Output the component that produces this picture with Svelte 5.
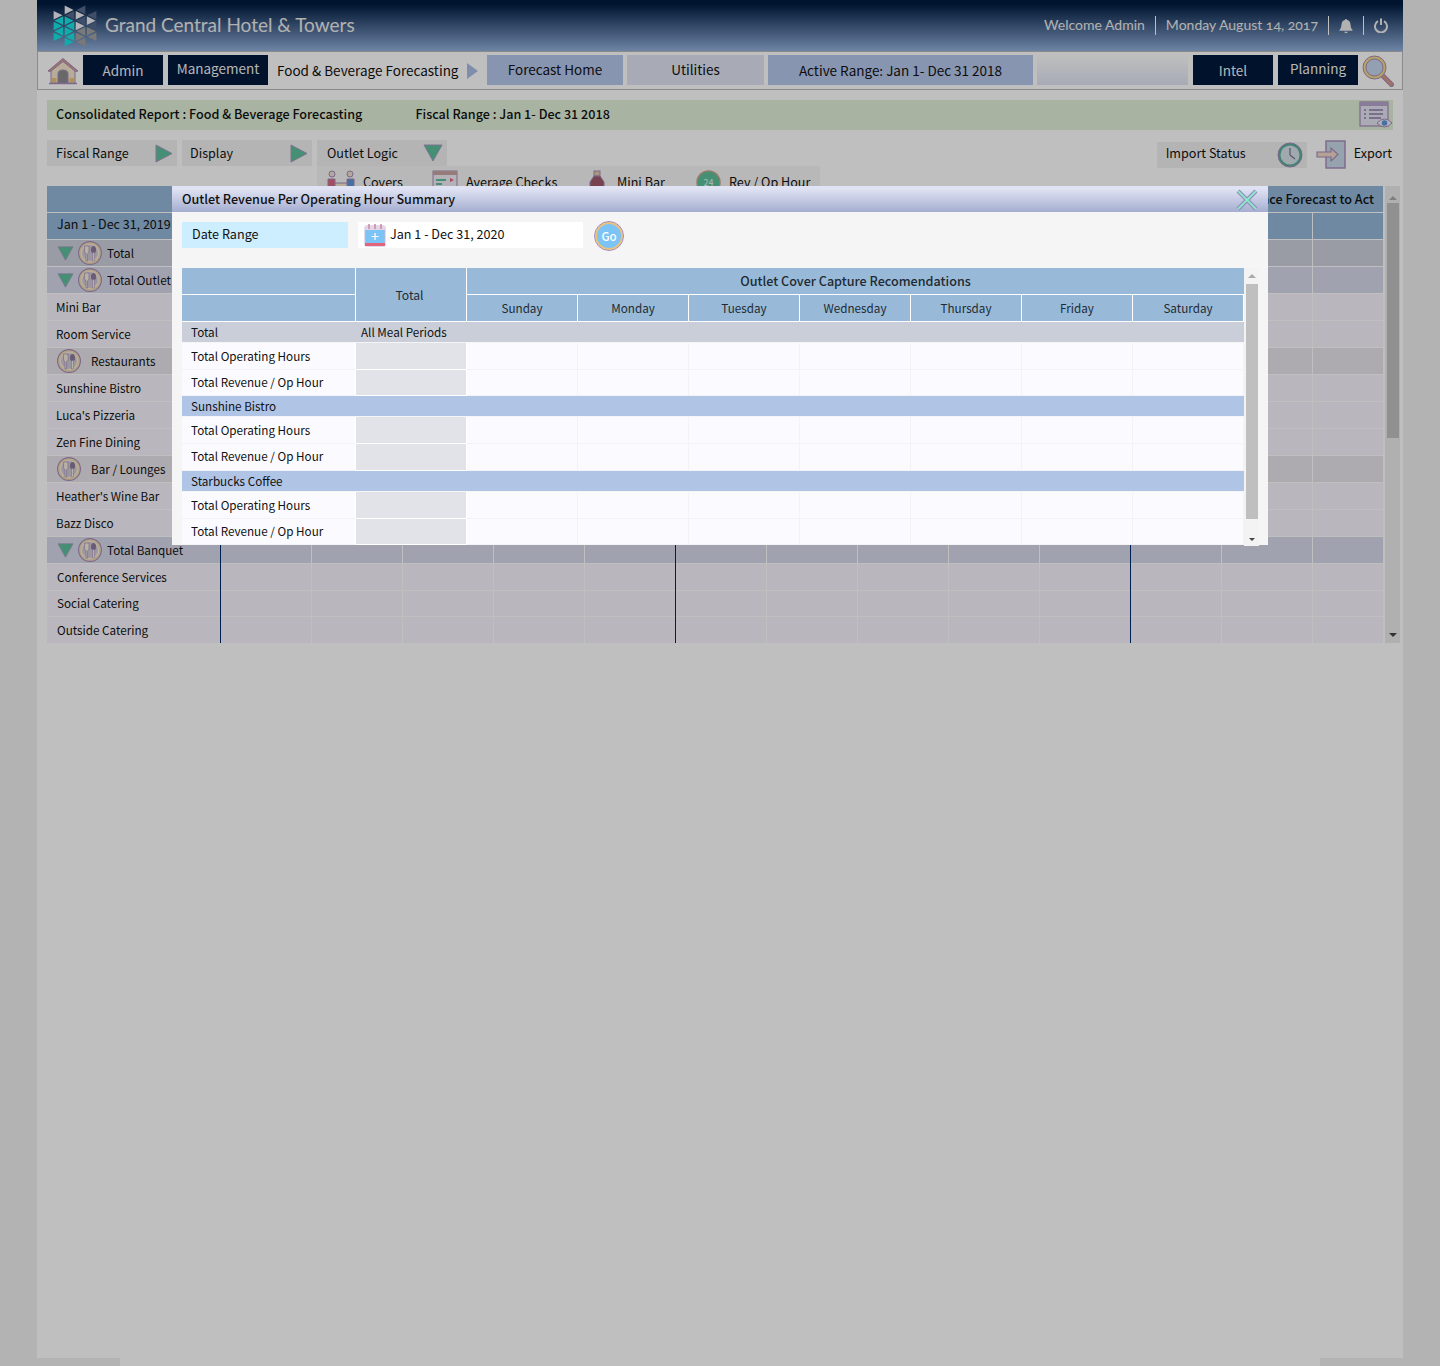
<script>
	const gridRows = [
		{ label: 'Total', kind: 'total', arrow: true, icon: true },
		{ label: 'Total Outlet', kind: 'sum', arrow: true, icon: true },
		{ label: 'Mini Bar', kind: 'item' },
		{ label: 'Room Service', kind: 'item' },
		{ label: 'Restaurants', kind: 'group', icon: true },
		{ label: 'Sunshine Bistro', kind: 'item' },
		{ label: "Luca's Pizzeria", kind: 'item' },
		{ label: 'Zen Fine Dining', kind: 'item' },
		{ label: 'Bar / Lounges', kind: 'group', icon: true },
		{ label: "Heather's Wine Bar", kind: 'item' },
		{ label: 'Bazz Disco', kind: 'item' },
		{ label: 'Total Banquet', kind: 'sum', arrow: true, icon: true },
		{ label: 'Conference Services', kind: 'item banquet' },
		{ label: 'Social Catering', kind: 'item banquet' },
		{ label: 'Outside Catering', kind: 'item banquet' }
	];
	const cols = Array.from({ length: 13 }, (_, i) => i);
	const days = ['Sunday', 'Monday', 'Tuesday', 'Wednesday', 'Thursday', 'Friday', 'Saturday'];
	const sections = [
		{ name: 'Sunshine Bistro' },
		{ name: 'Starbucks Coffee' }
	];

	// hexagon logo made of little triangles
	const logoTris = [];
	const h = 0.866;
	for (let c = -2; c < 2; c++) {
		for (let r = -5; r < 5; r++) {
			const x0 = c * h;
			const x1 = x0 + h;
			const odd = (c + r + 16) % 2 === 0;
			const y = r * 0.5;
			const pts = odd
				? [[x0, y - 0.5], [x0, y + 0.5], [x1, y]]
				: [[x1, y - 0.5], [x1, y + 0.5], [x0, y]];
			const cx = (pts[0][0] + pts[1][0] + pts[2][0]) / 3;
			const cy = (pts[0][1] + pts[1][1] + pts[2][1]) / 3;
			if (Math.abs(cy) + Math.abs(cx) * 0.577 > 2) continue;
			let fill;
			if (cx < 0 && cy > -0.6) fill = '#15e6e4';
			else if (cx >= 0 && cy > 0) fill = '#a2a2a2';
			else if (odd) fill = '#f0f0f6';
			else fill = '#55698c';
			const s = 0.8;
			const points = pts
				.map((p) => `${(cx + (p[0] - cx) * s).toFixed(3)},${(cy + (p[1] - cy) * s).toFixed(3)}`)
				.join(' ');
			logoTris.push({ points, fill });
		}
	}
</script>

{#snippet arrowRight()}
	<svg class="arrow" width="18" height="19" viewBox="0 0 18 19">
		<path d="M1 1 L17 9.5 L1 18 Z" fill="#5cc09c" stroke="#a79ac0" stroke-width="1" />
	</svg>
{/snippet}

{#snippet arrowDown(w = 20, ht = 18)}
	<svg class="arrow" width={w} height={ht} viewBox="0 0 20 18">
		<path d="M1 1 L19 1 L10 17 Z" fill="#5cc09c" stroke="#a79ac0" stroke-width="1" />
	</svg>
{/snippet}

{#snippet cutlery()}
	<svg class="cutlery" width="24" height="24" viewBox="0 0 24 24">
		<circle cx="12" cy="12" r="11.4" fill="#eed9b4" stroke="#a58bb8" stroke-width="1.1" />
		<circle cx="12" cy="12" r="8.6" fill="#cfcad8" stroke="#f6ead2" stroke-width="1.4" />
		<path d="M6.6 5 v5.500 q0 1.800 1.400 2.200 v7.300 h1.600 v-7.300 q1.400-.4 1.400-2.200 v-5.500 z" fill="#f6eedc" stroke="#a58bb8" stroke-width=".7" />
		<ellipse cx="15.500" cy="8.800" rx="2.500" ry="3.800" fill="#8c7a9c" />
		<rect x="14.700" y="11.500" width="1.600" height="8.500" fill="#f6eedc" stroke="#a58bb8" stroke-width=".5" />
	</svg>
{/snippet}

<div class="page">
	<div class="shell">
		<header class="topbar">
			<svg class="logo" width="46" height="44" viewBox="-1.8 -2.05 3.6 4.1" preserveAspectRatio="none">
				{#each logoTris as t}
					<polygon points={t.points} fill={t.fill} />
				{/each}
			</svg>
			<h1>Grand Central Hotel &amp; Towers</h1>
			<div class="user">
				<span>Welcome Admin</span>
				<i></i>
				<span>Monday August 14, 2017</span>
				<i></i>
				<svg width="14" height="16" viewBox="0 0 15 16">
					<path d="M7.5 0.5 q1 0 1.2 1.2 q3.4.8 3.6 4.6 q.1 3.6 2.2 6 v.9 H.5 v-.9 q2.1-2.4 2.2-6 q.2-3.800 3.600-4.600 q.2-1.200 1.200-1.200 z M5.500 14.200 h4 q-.4 1.500-2 1.500 t-2-1.500 z" fill="#ededed" />
				</svg>
				<i></i>
				<svg width="14" height="15" viewBox="0 0 14 15">
					<path d="M4 3.200 A6 6 0 1 0 10 3.200" fill="none" stroke="#ededed" stroke-width="2" />
					<path d="M7 0.500 v6.500" stroke="#ededed" stroke-width="2" />
				</svg>
			</div>
		</header>

		<nav class="navbar">
			<svg class="home" width="32" height="28" viewBox="0 0 32 28">
				<path d="M4 26 V13 L16 3 L28 13 V26 Z" fill="#f4e6cc" stroke="#a58bb8" stroke-width="1" />
				<path d="M1 14 L16 1.500 L31 14 L28.500 14.500 L16 4.500 L3.500 14.500 Z" fill="#d79a8e" stroke="#a58bb8" stroke-width="1" />
				<path d="M11 26 V17 q0-4 5-4 t5 4 V26 Z" fill="#8b8b8f" stroke="#a58bb8" stroke-width="1" />
				<rect x="4.500" y="21" width="5" height="4.500" fill="#eac27c" />
				<rect x="22.500" y="21" width="5" height="4.500" fill="#eac27c" />
				<path d="M2 26.500 H30" stroke="#a58bb8" stroke-width="1.500" />
			</svg>
			<a class="dark b80 admin">Admin</a>
			<a class="dark mgmt">Management</a>
			<span class="crumb">Food &amp; Beverage Forecasting</span>
			<svg class="crumb-arrow" width="11" height="16" viewBox="0 0 11 16"><path d="M0 0 L11 8 L0 16 Z" fill="#a9bde6" /></svg>
			<a class="tab blue fhome">Forecast Home</a>
			<a class="tab pale util">Utilities</a>
			<a class="tab blue active">Active Range: Jan 1- Dec 31 2018</a>
			<span class="tab fade"></span>
			<a class="dark b80 intel">Intel</a>
			<a class="dark b80 plan">Planning</a>
			<svg class="search" width="32" height="32" viewBox="0 0 32 32">
				<path d="M20 20 L29.500 29.500" stroke="#a58bb8" stroke-width="5" stroke-linecap="round" />
				<path d="M20 20 L29.500 29.500" stroke="#d99a86" stroke-width="3" stroke-linecap="round" />
				<circle cx="12.500" cy="12.500" r="11.500" fill="#f5d88c" stroke="#a58bb8" stroke-width="1" />
				<circle cx="12.500" cy="12.500" r="8.500" fill="#c4d6ee" stroke="#a58bb8" stroke-width="1" />
			</svg>
		</nav>

		<section class="report">
			<strong>Consolidated Report : Food &amp; Beverage Forecasting</strong>
			<strong class="fiscal">Fiscal Range : Jan 1- Dec 31 2018</strong>
			<svg class="report-ico" width="34" height="28" viewBox="0 0 34 28">
				<rect x="1" y="1" width="28" height="24" fill="#e4e4f2" stroke="#a58bb8" stroke-width="1.200" />
				<rect x="1" y="1" width="28" height="4" fill="#b7a6cc" />
				<path d="M5 9 h2 M5 13 h2 M5 17 h2 M10 9 h14 M10 13 h14 M10 17 h12" stroke="#8f7ba8" stroke-width="1.500" />
				<path d="M18 22 q7.500-8 15 0 q-7.500 8-15 0 z" fill="#f0f0f8" stroke="#a58bb8" stroke-width="1" />
				<circle cx="25.500" cy="22" r="2.800" fill="#5f94d8" />
			</svg>
		</section>

		<section class="filters">
			<div class="chip"><span>Fiscal Range</span> {@render arrowRight()}</div>
			<div class="chip display"><span>Display</span> {@render arrowRight()}</div>
			<div class="chip logic">
				<span>Outlet Logic</span> {@render arrowDown()}
				<div class="dropdown">
					<span class="opt covers">
						<svg width="28" height="30" viewBox="0 0 28 30">
							<circle cx="5" cy="4" r="3" fill="#f0dfd0" stroke="#a58bb8" />
							<circle cx="23" cy="4" r="3" fill="#f0dfd0" stroke="#a58bb8" />
							<path d="M1 9 h7 v16 h-7 z" fill="#e0657a" stroke="#a58bb8" />
							<path d="M20 9 h7 v16 h-7 z" fill="#5f94d8" stroke="#a58bb8" />
							<rect x="8" y="13" width="12" height="8" fill="#f4e6cc" stroke="#a58bb8" />
						</svg>
						Covers
					</span>
					<span class="opt checks">
						<svg width="26" height="24" viewBox="0 0 26 24">
							<rect x="1" y="1" width="24" height="20" fill="#f0eef4" stroke="#a58bb8" />
							<rect x="1" y="1" width="24" height="4" fill="#c9a4a4" />
							<path d="M4 10 h10 M4 14 h6" stroke="#5cc09c" stroke-width="2" />
							<path d="M18 8 l4 2 -4 2 z" fill="#e0657a" />
							<path d="M8 22 l10-6 v6 z" fill="#5f94d8" />
						</svg>
						Average Checks
					</span>
					<span class="opt minibar">
						<svg width="22" height="24" viewBox="0 0 22 24">
							<rect x="7" y="1" width="6" height="5" fill="#e6c9a4" stroke="#a58bb8" />
							<path d="M7 6 h6 l4 6 v10 h-14 v-10 z" fill="#a0586c" stroke="#a58bb8" />
							<path d="M3 17 h19" stroke="#a58bb8" stroke-width="2" />
						</svg>
						Mini Bar
					</span>
					<span class="opt rev">
						<svg width="25" height="25" viewBox="0 0 25 25">
							<circle cx="12.500" cy="12.500" r="11.500" fill="#5cc09c" stroke="#c5a58c" stroke-width="1.500" />
							<text x="12.500" y="16" text-anchor="middle" font-size="9" fill="#e8f4ee">24</text>
						</svg>
						Rev / Op Hour
					</span>
				</div>
			</div>
			<div class="right">
				<div class="chip import">
					<span>Import Status</span>
					<svg width="26" height="26" viewBox="0 0 26 26">
						<circle cx="13" cy="13" r="12" fill="#5cb09c" stroke="#a58bb8" stroke-width="1" />
						<circle cx="13" cy="13" r="9.500" fill="#d4e2e8" />
						<path d="M13 6 v7 l5 4" fill="none" stroke="#7a6e92" stroke-width="1.200" />
					</svg>
				</div>
				<div class="export">
					<svg width="30" height="29" viewBox="0 0 30 29">
						<rect x="10" y="1" width="19" height="27" fill="#cad8ea" stroke="#a58bb8" stroke-width="1.400" />
						<path d="M1 12 h14 v-4 l7 6.500 -7 6.500 v-4 h-14 z" fill="#f0d9c8" stroke="#a58bb8" stroke-width="1.100" />
					</svg>
					<span>Export</span>
				</div>
			</div>
		</section>

		<section class="grid-wrap">
			<div class="grid">
				<div class="row head">
					<div class="cell first"></div>
					<div class="cell wide"></div>
					<div class="cell wide"></div>
					<div class="cell variance">Variance Forecast to Act</div>
				</div>
				<div class="row head">
					<div class="cell first"><span>Jan 1 - Dec 31, 2019</span></div>
					{#each cols as c}
						<div class="cell" class:check={c === 10}>{c === 10 ? 'Avg Check' : ''}</div>
					{/each}
				</div>
				{#each gridRows as r}
					<div class="row {r.kind}">
						<div class="cell first">
							{#if r.arrow}{@render arrowDown(17, 15)}{/if}
							{#if r.icon}{@render cutlery()}{/if}
							<span>{r.label}</span>
						</div>
						{#each cols as c}
							<div class="cell" class:navy={c === 0 || c === 5 || c === 10}></div>
						{/each}
					</div>
				{/each}
			</div>
			<div class="bar">
				<span class="up"></span>
				<span class="thumb"></span>
				<span class="down"></span>
			</div>
		</section>

		<footer class="foot"><span></span></footer>

		<div class="dim"></div>

		<div class="modal">
			<div class="m-title">
				Outlet Revenue Per Operating Hour Summary
				<svg class="close" width="22" height="22" viewBox="0 0 22 22">
					<path d="M2 2 L20 20 M20 2 L2 20" stroke="#8f86bb" stroke-width="4" />
					<path d="M2 2 L20 20 M20 2 L2 20" stroke="#8ce8c8" stroke-width="2" />
				</svg>
			</div>
			<div class="m-filter">
				<div class="m-label">Date Range</div>
				<div class="m-input">
					<svg width="22" height="24" viewBox="0 0 22 24">
						<rect x="1" y="3" width="20" height="20" rx="1" fill="#7cc4f5" stroke="#c7b4d8" />
						<rect x="1" y="3" width="20" height="4" fill="#e4d4e8" />
						<rect x="1" y="20" width="20" height="3" fill="#e0657a" />
						<path d="M5 1 v5 M11 1 v5 M17 1 v5" stroke="#c58c9c" stroke-width="1.500" />
						<path d="M11 10 v7 M7.500 13.500 h7" stroke="#fff" stroke-width="1.200" />
					</svg>
					<span>Jan 1 - Dec 31, 2020</span>
				</div>
				<div class="go">Go</div>
			</div>
			<div class="m-body">
				<div class="m-table">
					<div class="hd blank1"></div>
					<div class="hd total">Total</div>
					<div class="hd caption">Outlet Cover Capture Recomendations</div>
					<div class="hd blank2"></div>
					{#each days as d}<div class="hd">{d}</div>{/each}

					<div class="band grey"><span class="lbl">Total</span><span class="meal">All Meal Periods</span></div>
					{#each ['Total Operating Hours', 'Total Revenue / Op Hour'] as t}
						<div class="lab">{t}</div>
						<div class="tot"></div>
						{#each days as d}<div class="val"></div>{/each}
					{/each}

					{#each sections as s, i}
						<div class="band blue"><span class="lbl">{s.name}</span></div>
						{#each ['Total Operating Hours', 'Total Revenue / Op Hour'] as t, j}
							<div class="lab" class:tight={i === 0 && j === 1}>{t}</div>
							<div class="tot"></div>
							{#each days as d}<div class="val"></div>{/each}
						{/each}
					{/each}
				</div>
				<div class="m-bar">
					<span class="up"></span>
					<span class="thumb"></span>
					<span class="down"></span>
				</div>
			</div>
		</div>
	</div>
</div>

<style>
	:global(body) {
		margin: 0;
		background: #efefef;
		color: #111;
		font-family: 'Noto Sans CJK SC', 'Noto Sans', sans-serif;
		font-size: 12.6px;
	}

	.page {
		min-height: 1366px;
		overflow: hidden;
	}

	.shell {
		position: relative;
		width: 1366px;
		height: 1366px;
		margin: 0 auto;
		background: #fff;
		display: flex;
		flex-direction: column;
	}

	.dim {
		position: absolute;
		left: -37px;
		top: 0;
		width: 1440px;
		height: 1366px;
		background: rgba(0, 0, 0, 0.25);
		z-index: 10;
	}

	.topbar {
		height: 51px;
		flex: none;
		display: flex;
		align-items: center;
		padding: 0 15px;
		box-sizing: border-box;
		background: linear-gradient(#001b40 8%, #92b0dc 100%);
		color: #ededed;
	}

	.logo {
		margin-right: 7px;
		margin-top: 0;
	}

	h1 {
		font: 400 19px Lato, sans-serif;
		margin: 0 0 2px;
		color: #ededed;
	}

	.user {
		margin-left: auto;
		display: flex;
		align-items: center;
		gap: 10px;
		font: 400 14px Lato, sans-serif;
		font-variant-numeric: oldstyle-nums;
	}

	.user span {
		padding-bottom: 2px;
	}

	.user i {
		width: 1px;
		height: 19px;
		background: #fff;
	}

	.navbar {
		height: 39px;
		flex: none;
		box-sizing: border-box;
		border: 1px solid #b8b8b8;
		display: flex;
		align-items: center;
		font-size: 13.5px;
		padding-left: 9px;
	}

	.navbar a,
	.tab {
		height: 30px;
		display: flex;
		align-items: center;
		justify-content: center;
		box-sizing: border-box;
		align-self: flex-start;
		margin-top: 3px;
	}

	.dark {
		background: #00183b;
		color: #f3f3f3;
	}

	.b80 {
		width: 80px;
	}

	.home {
		margin-right: 4px;
	}

	.admin {
		margin-right: 5px;
	}

	.mgmt {
		width: 100px;
		margin-right: 9px;
		padding-bottom: 5px;
	}

	.crumb {
		padding-bottom: 2px;
		width: 190px;
		white-space: nowrap;
	}

	.crumb-arrow {
		margin-right: 9px;
	}

	.tab.blue {
		background: #b5c7eb;
	}

	.tab.pale {
		background: #e0e4f3;
	}

	.fhome {
		width: 136px;
		margin-right: 4px;
		padding-bottom: 2px;
	}

	.util {
		width: 137px;
		margin-right: 4px;
		padding-bottom: 2px;
	}

	.active {
		width: 265px;
		margin-right: 4px;
	}

	.fade {
		width: 151px;
		margin-right: 5px;
		background: linear-gradient(#fff, #e0e4f3);
	}

	.intel {
		margin-right: 5px;
	}

	.plan {
		padding-bottom: 5px;
	}

	.search {
		margin-left: 4px;
	}

	.report {
		flex: none;
		margin: 10px 10px 0;
		height: 30px;
		background: #e1f0d7;
		display: flex;
		align-items: center;
		padding-left: 9px;
		position: relative;
	}

	.report strong {
		font-weight: 500;
		white-space: nowrap;
		padding-bottom: 3px;
	}

	.fiscal {
		margin-left: 53px;
	}

	.report-ico {
		margin-left: auto;
	}

	.filters {
		flex: none;
		margin: 10px 10px 0;
		height: 46px;
		display: flex;
		gap: 5px;
		align-items: flex-start;
	}

	.chip {
		width: 130px;
		height: 26px;
		box-sizing: border-box;
		background: #f1f1f1;
		display: flex;
		align-items: center;
		justify-content: space-between;
		padding: 0 4px 0 9px;
		position: relative;
	}

	.chip > span {
		padding-bottom: 2px;
	}

	.display {
		padding-left: 8px;
	}

	.logic {
		padding-left: 10px;
	}

	.dropdown {
		position: absolute;
		left: 0;
		top: 26px;
		width: 503px;
		height: 40px;
		background: #f6f6f6;
	}

	.opt {
		position: absolute;
		top: 4px;
		display: flex;
		gap: 8px;
		align-items: flex-start;
		line-height: 24px;
		white-space: nowrap;
	}

	.covers { left: 10px; }
	.checks { left: 115px; }
	.minibar { left: 270px; }
	.rev { left: 379px; }

	.right {
		margin-left: auto;
		display: flex;
		align-items: center;
		gap: 9px;
		padding-right: 1px;
	}

	.import {
		width: 150px;
		padding-right: 4px;
	}

	.import > span {
		padding-bottom: 5px;
	}

	.export {
		display: flex;
		align-items: center;
		gap: 8px;
		background: #fff;
	}

	.export span {
		padding-bottom: 5px;
	}

	.grid-wrap {
		flex: none;
		margin-left: 10px;
		height: 457px;
		display: flex;
		overflow: hidden;
	}

	.grid {
		width: 1336px;
		flex: none;
	}

	.row {
		display: grid;
		grid-template-columns: 173px repeat(12, 91px) 71px;
		height: 27px;
		box-sizing: border-box;
		border-bottom: 1px solid #fff;
	}

	.row.banquet {
		height: 26.6px;
	}

	.row.head {
		background: #94b7d9;
	}

	.row.head:first-child {
		grid-template-columns: 173px 455px 455px 253px;
	}

	.cell {
		box-sizing: border-box;
		border-left: 1px solid #fff;
		white-space: nowrap;
		font-size: 11.7px;
		position: relative;
	}

	.cell.first {
		border-left: 0;
		display: flex;
		align-items: center;
		gap: 4px;
		padding-left: 10px;
	}

	.cell.first span {
		padding-bottom: 2px;
	}

	.total .first span,
	.sum .first span {
		margin-left: 1px;
	}

	.head .cell.first {
		font-size: 12.5px;
	}

	.head .cell.first span {
		padding-bottom: 6px;
	}

	.banquet .cell.first span {
		padding-bottom: 1px;
	}

	.cell.navy::before {
		content: '';
		position: absolute;
		left: -1px;
		top: 0;
		bottom: -1px;
		width: 1px;
		background: #002a6c;
	}

	.check {
		text-align: center;
		line-height: 22px;
		font-size: 12.6px;
	}

	.variance {
		text-align: right;
		padding-right: 9px;
		line-height: 26px;
		font-weight: 500;
		font-size: 12.6px;
	}

	.total { background: #cdd0dc; }
	.sum { background: #d7d9eb; }
	.group { background: #e7e4eb; }
	.item { background: #f7f5fc; }
	.item .first { padding-left: 9px; }
	.banquet .first { padding-left: 10px; }
	.group .first { gap: 10px; }

	.bar {
		width: 15px;
		margin-left: 2px;
		background: #ebebeb;
		position: relative;
	}

	.bar .thumb {
		position: absolute;
		left: 2px;
		right: 1px;
		top: 17px;
		height: 235px;
		background: #c0c0c0;
	}

	.up, .down {
		position: absolute;
		left: 50%;
		margin-left: -4px;
		width: 0;
		height: 0;
		border: 4px solid transparent;
	}

	.bar .up {
		top: 6px;
		border-bottom-color: #aaa;
	}

	.bar .down {
		bottom: 2px;
		border-top-color: #444;
	}

	.foot {
		margin-top: auto;
		height: 8px;
		background: #efefef;
		display: flex;
		justify-content: center;
	}

	.foot span {
		width: 1200px;
		background: #fff;
	}

	.modal {
		position: absolute;
		left: 135px;
		top: 186px;
		width: 1096px;
		height: 359px;
		background: #f5f5f5;
		z-index: 20;
	}

	.m-title {
		height: 26px;
		background: linear-gradient(#e0e3f3 10%, #a5aed0);
		padding-left: 10px;
		line-height: 26px;
		font-weight: 500;
		position: relative;
	}

	.close {
		position: absolute;
		right: 10px;
		top: 3px;
	}

	.m-filter {
		display: flex;
		align-items: flex-start;
		margin: 10px 10px 0;
		height: 46px;
	}

	.m-label {
		width: 166px;
		height: 26px;
		line-height: 24px;
		background: #cdeeff;
		padding-left: 10px;
		box-sizing: border-box;
		margin-right: 10px;
	}

	.m-input {
		width: 225px;
		height: 26px;
		background: #fff;
		display: flex;
		align-items: center;
		gap: 4px;
		padding-left: 6px;
		box-sizing: border-box;
		margin-right: 12px;
	}

	.m-input span {
		padding-bottom: 3px;
	}

	.go {
		width: 24px;
		height: 24px;
		border-radius: 50%;
		background: #7cc4f5;
		border: 2px solid #eac27c;
		outline: 1px solid #a58bb8;
		color: #fff;
		font-size: 11.5px;
		font-weight: 500;
		text-align: center;
		line-height: 24px;
	}

	.m-body {
		margin-left: 10px;
		display: flex;
		align-items: flex-start;
	}

	.m-table {
		width: 1062px;
		display: grid;
		grid-template-columns: 174px 111px repeat(7, 111px);
		grid-auto-rows: 27px;
		grid-template-rows: 27px 27px 21px 27px 26px 21px 27px 27px 21px 27px 26px;
		font-size: 11.7px;
	}

	.hd {
		background: #98bad8;
		border-right: 1px solid #fff;
		border-bottom: 1px solid #fff;
		display: flex;
		align-items: center;
		justify-content: center;
		color: #222a33;
		padding-bottom: 2px;
	}

	.blank1 { grid-column: 1; grid-row: 1; }
	.blank2 { grid-column: 1; grid-row: 2; }
	.hd.total {
		grid-column: 2;
		grid-row: 1 / span 2;
		padding: 0 3px 0 0;
		font-size: 12.2px;
	}
	.hd.caption {
		grid-column: 3 / span 7;
		font-weight: 500;
		font-size: 12.6px;
		border-right: 0;
	}

	.band {
		grid-column: 1 / -1;
		display: flex;
		align-items: center;
		margin-bottom: 1px;
		padding-bottom: 2px;
	}

	.band.grey { background: #c9ced8; }
	.band.blue { background: #b0c4e6; }
	.lbl { width: 179px; padding-left: 9px; box-sizing: border-box; }

	.lab {
		background: #fbfbff;
		border-bottom: 1px solid #f3f3f5;
		border-right: 1px solid #fff;
		padding: 0 0 2px 9px;
		display: flex;
		align-items: center;
		color: #111;
	}

	.lab.tight {
		padding-bottom: 4px;
	}

	.tot {
		background: #e1e3e8;
		border-bottom: 1px solid #fff;
		border-right: 1px solid #fff;
	}

	.val {
		background: #fbfbff;
		border-bottom: 1px solid #f3f3f5;
		border-right: 1px solid #f3f3f5;
	}

	.m-bar {
		width: 15px;
		height: 278px;
		background: #f3f3f3;
		position: relative;
	}

	.m-bar .thumb {
		position: absolute;
		left: 2px;
		width: 12px;
		top: 16px;
		height: 235px;
		background: #bfbfbf;
	}

	.m-bar .up {
		top: 2px;
		border-bottom-color: #aaa;
	}

	.m-bar .down {
		bottom: 2px;
		border-width: 3px;
		margin-left: -3px;
		border-top-color: #444;
	}
</style>
